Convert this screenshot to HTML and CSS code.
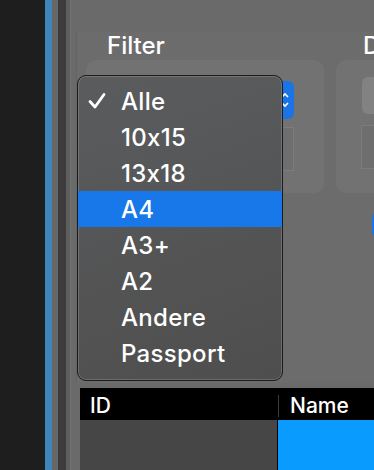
FILE: index.html
```html
<!doctype html>
<html lang="de">
<head>
    <meta charset="UTF-8">
    <title>Filter</title>
    <link rel="stylesheet" href="styles.css">
</head>
<body>
<div class="screen">
    <div class="dock"></div>
    <div class="stripe"></div>
    <div class="edge-a"></div>
    <div class="edge-b"></div>
    <div class="edge-c"></div>
    <div class="main">
        <div class="topbar"></div>
        <div class="panel">
            <div class="groups">
                <div class="group group-filter">
                    <div class="group-label">Filter</div>
                    <div class="group-box">
                        <div class="popup">
                            <svg width="8" height="20" viewBox="0 0 8 20">
                                <path d="M1 7 L4 4 L7 7 M1 13 L4 16 L7 13" fill="none" stroke="#fff" stroke-width="1.6"/>
                            </svg>
                        </div>
                        <div class="field"></div>
                    </div>
                </div>
                <div class="group group-d">
                    <div class="group-label">D</div>
                    <div class="group-box">
                        <div class="btn"></div>
                        <div class="field"></div>
                    </div>
                </div>
            </div>
            <div class="action"></div>
        </div>
        <div class="table">
            <div class="thead">
                <div class="th th-id">ID</div>
                <div class="th th-name">Name</div>
            </div>
            <div class="tbody">
                <div class="td-id"></div>
                <div class="td-name"></div>
            </div>
        </div>
    </div>

    <ul class="menu">
        <li class="item checked">
            <svg class="check" width="18" height="18" viewBox="0 0 18 18">
                <path d="M2 9.5 L7 15 L16 2.5" fill="none" stroke="#fff" stroke-width="2.8" stroke-linecap="round" stroke-linejoin="round"/>
            </svg>
            Alle
        </li>
        <li class="item">10x15</li>
        <li class="item">13x18</li>
        <li class="item active">A4</li>
        <li class="item">A3+</li>
        <li class="item">A2</li>
        <li class="item">Andere</li>
        <li class="item">Passport</li>
    </ul>
</div>
</body>
</html>
```

FILE: styles.css
```css
* {
    padding: 0;
    margin: 0;
    box-sizing: border-box;
}

ul {
    list-style: none;
}

html, body {
    width: 374px;
    height: 470px;
    overflow: hidden;
    background-color: #1e1e1e;
    font-family: Inter, "Noto Sans", sans-serif;
    font-feature-settings: "calt" 0;
    color: #fff;
}

.screen {
    position: relative;
    display: flex;
    width: 374px;
    height: 470px;
}

.dock, .stripe, .edge-a, .edge-b, .edge-c {
    flex-shrink: 0;
}

.dock {
    width: 45px;
    background-color: #1e1e1e;
}

.stripe {
    width: 7px;
    background-color: #3e86ba;
}

.edge-a {
    width: 6px;
    background-color: #676767;
}

.edge-b {
    width: 8px;
    background-color: #3c3c3c;
}

.edge-c {
    width: 4px;
    background-color: #5e5e5e;
}

.main {
    flex: 1;
    min-width: 0;
    overflow: hidden;
    display: flex;
    flex-direction: column;
    background-color: #6a6a6a;
    border-left: 1px solid #747474;
}

.topbar {
    height: 32px;
    flex-shrink: 0;
}

.panel {
    height: 351px;
    flex-shrink: 0;
    margin-left: 5px;
    background-color: #6c6c6c;
    border-left: 1px solid #646464;
    padding-left: 9px;
}

.groups {
    display: flex;
    gap: 12px;
}

.group {
    flex-shrink: 0;
}

.group-label {
    height: 28px;
    padding-top: 2px;
    padding-left: 21px;
    font-size: 24px;
    font-weight: 500;
    line-height: 24px;
    white-space: nowrap;
}

.group-filter .group-box {
    width: 238px;
}

.group-d .group-box {
    width: 60px;
}

.group-d .group-label {
    padding-left: 27px;
}

.group-box {
    height: 133px;
    border-radius: 10px;
    background-color: #727272;
    padding-top: 21px;
    display: flex;
    flex-direction: column;
}

.popup {
    align-self: flex-end;
    margin-right: 30px;
    width: 36px;
    height: 38px;
    border-radius: 6px;
    background-color: #1b74e6;
    display: flex;
    justify-content: flex-end;
    align-items: center;
    padding-right: 5px;
}

.field {
    margin-top: 8px;
    align-self: flex-end;
    margin-right: 30px;
    width: 40px;
    height: 44px;
    border: 1px solid #7c7c7c;
    background-color: #6e6e6e;
}

.group-d .group-box {
    padding-top: 17px;
}

.btn {
    margin-left: 26px;
    height: 37px;
    border-radius: 6px;
    background-color: #828282;
}

.group-d .field {
    align-self: stretch;
    margin: 11px 0 0 25px;
    width: auto;
}

.action {
    margin: 21px 0 0 286px;
    width: 10px;
    height: 22px;
    border-radius: 4px 0 0 4px;
    background-color: #1b74e6;
}

.table {
    margin: 5px 0 0 9px;
    flex: 1;
    display: flex;
    flex-direction: column;
}

.thead {
    height: 32px;
    padding-top: 3px;
    background-color: #000;
    display: flex;
    align-items: center;
    font-size: 21px;
    font-weight: 500;
}

.th-id {
    width: 198px;
    padding-left: 10px;
}

.th-name {
    flex: 1;
    padding-left: 11px;
    border-left: 1px solid #3a3a3a;
    line-height: 22px;
}

.tbody {
    flex: 1;
    display: flex;
}

.td-id {
    width: 198px;
    background-color: #464646;
    border-right: 1px solid #000;
}

.td-name {
    flex: 1;
    background-color: #0a9bff;
}

.menu {
    position: absolute;
    left: 77px;
    top: 75px;
    width: 206px;
    height: 306px;
    padding-top: 7px;
    border: 1px solid #1c1c1c;
    border-radius: 9px;
    background: linear-gradient(160deg, #5b5c5e, #4e4e4e);
    box-shadow: inset 0 0 0 1px rgba(255, 255, 255, 0.16);
    overflow: hidden;
}

.item {
    position: relative;
    height: 36px;
    line-height: 38px;
    padding-left: 43px;
    font-size: 24px;
    font-weight: 500;
    letter-spacing: 0.3px;
}

.item.active {
    background-color: #1877e9;
}

.check {
    position: absolute;
    left: 10px;
    top: 9px;
}
```
